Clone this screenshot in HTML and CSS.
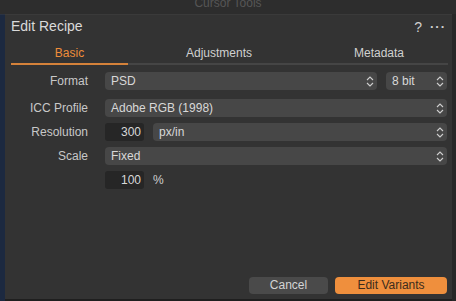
FILE: index.html
```html
<!DOCTYPE html>
<html lang="en">
<head>
    <meta charset="UTF-8">
    <title>Edit Recipe</title>
    <link rel="stylesheet" href="styles.css">
</head>
<body>
<!--window title strip-->
<div class="topbar"><span>Cursor Tools</span></div>
<div class="frame">
    <div class="side-left"></div>
    <div class="dialog">
        <div class="title-row">
            <span class="title">Edit Recipe</span>
            <span class="title-tools"><span class="help">?</span><span class="more">···</span></span>
        </div>
        <div class="tabs">
            <div class="tab active">Basic</div>
            <div class="tab">Adjustments</div>
            <div class="tab">Metadata</div>
        </div>
        <div class="form">
            <label class="label first">Format</label>
            <div class="control first">
                <div class="select grow"><span>PSD</span><svg class="chev" viewBox="0 0 8 12"><path d="M1 4.5 L4 1.5 L7 4.5 M1 7.5 L4 10.5 L7 7.5"/></svg></div>
                <div class="select bits"><span>8 bit</span><svg class="chev" viewBox="0 0 8 12"><path d="M1 4.5 L4 1.5 L7 4.5 M1 7.5 L4 10.5 L7 7.5"/></svg></div>
            </div>

            <label class="label">ICC Profile</label>
            <div class="control">
                <div class="select grow"><span>Adobe RGB (1998)</span><svg class="chev" viewBox="0 0 8 12"><path d="M1 4.5 L4 1.5 L7 4.5 M1 7.5 L4 10.5 L7 7.5"/></svg></div>
            </div>

            <label class="label">Resolution</label>
            <div class="control">
                <div class="number">300</div>
                <div class="select grow"><span>px/in</span><svg class="chev" viewBox="0 0 8 12"><path d="M1 4.5 L4 1.5 L7 4.5 M1 7.5 L4 10.5 L7 7.5"/></svg></div>
            </div>

            <label class="label">Scale</label>
            <div class="control">
                <div class="select grow"><span>Fixed</span><svg class="chev" viewBox="0 0 8 12"><path d="M1 4.5 L4 1.5 L7 4.5 M1 7.5 L4 10.5 L7 7.5"/></svg></div>
            </div>

            <label class="label"></label>
            <div class="control">
                <div class="number">100</div>
                <span class="unit">%</span>
            </div>
        </div>
        <div class="buttons">
            <button class="btn cancel">Cancel</button>
            <button class="btn primary">Edit Variants</button>
        </div>
    </div>
    <div class="side-right"></div>
</div>
</body>
</html>
```

FILE: styles.css
```css
body {
    margin: 0;
    padding: 0;
    width: 456px;
    height: 301px;
    overflow: hidden;
    background-color: #2d2d2d;
    font-family: "Liberation Sans", Arial, sans-serif;
    color: #d4d4d4;
}

.topbar {
    height: 14px;
    overflow: hidden;
    text-align: center;
}

.topbar span {
    display: block;
    margin-top: -4px;
    font-size: 12px;
    line-height: 14px;
    color: #565656;
}

.frame {
    display: flex;
    height: 287px;
}

.side-left {
    width: 5px;
    background-color: #1c2940;
    border-top: 1px solid #2b3342;
}

.side-right {
    width: 4px;
    background-color: #272727;
}

.dialog {
    flex: 1;
    display: flex;
    flex-direction: column;
    background-color: #333333;
    border-top: 1px solid #3a3a3a;
    border-bottom: 2px solid #1f1f1f;
    padding: 3px 5px 5px 6px;
}

.title-row {
    display: flex;
    justify-content: space-between;
    align-items: center;
    height: 17px;
}

.title {
    font-size: 14px;
    line-height: 17px;
    color: #dadada;
}

.title-tools {
    display: flex;
    align-items: center;
    gap: 8px;
    margin-right: 1px;
    color: #cfcfcf;
}

.help {
    font-size: 14px;
}

.more {
    font-size: 13px;
    letter-spacing: 1px;
    font-weight: bold;
}

.tabs {
    display: grid;
    grid-template-columns: 117px 182px 1fr;
    margin-top: 11px;
    margin-right: -1px;
}

.tab {
    text-align: center;
    font-size: 12px;
    line-height: 14px;
    padding-bottom: 3px;
    border-bottom: 2px solid #454545;
    color: #d0d0d0;
}

.tab.active {
    color: #ee8d3a;
    border-bottom-color: #d5823a;
}

.form {
    display: grid;
    grid-template-columns: 77px 1fr;
    column-gap: 17px;
    row-gap: 6px;
    margin-top: 7px;
}

.label {
    text-align: right;
    font-size: 12px;
    line-height: 18px;
    color: #c8c8c8;
}

.label.first,
.control.first {
    margin-bottom: 3px;
}

.control {
    display: flex;
    align-items: center;
    gap: 9px;
    height: 18px;
}

.select {
    display: flex;
    align-items: center;
    justify-content: space-between;
    height: 18px;
    padding: 0 3px 0 6px;
    background-color: #474747;
    border-radius: 4px;
    font-size: 12px;
    color: #d8d8d8;
}

.grow {
    flex: 1;
}

.bits {
    width: 52px;
}

.chev {
    width: 8px;
    height: 13px;
    fill: none;
    stroke: #cfcfcf;
    stroke-width: 1.1;
}

.number {
    width: 36px;
    height: 18px;
    padding-right: 3px;
    text-align: right;
    background-color: #262626;
    border-radius: 3px;
    font-size: 12px;
    line-height: 18px;
    color: #d8d8d8;
}

.unit {
    font-size: 12px;
    color: #d0d0d0;
}

.buttons {
    display: flex;
    justify-content: flex-end;
    gap: 7px;
    margin-top: auto;
}

.btn {
    height: 17px;
    padding: 0;
    border: none;
    border-radius: 4px;
    font-family: "Liberation Sans", Arial, sans-serif;
    font-size: 12px;
    line-height: 17px;
}

.cancel {
    width: 79px;
    background-color: #4a4a4a;
    color: #d4d4d4;
}

.primary {
    width: 112px;
    background-color: #ef8f3d;
    color: #3c2c1c;
}
```
